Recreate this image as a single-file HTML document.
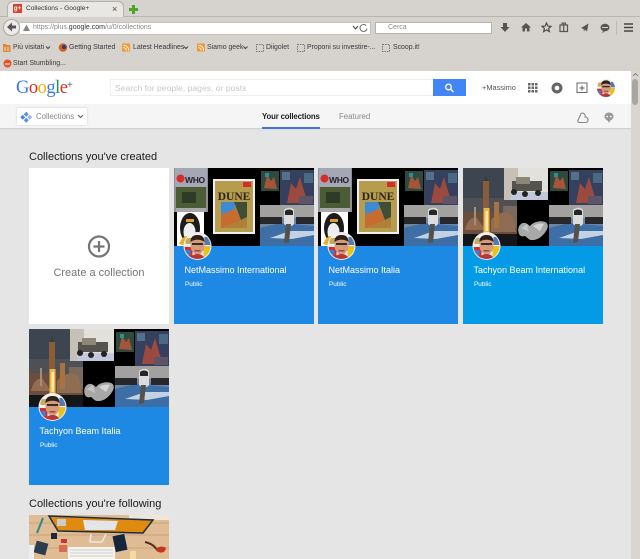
<!DOCTYPE html>
<html><head><meta charset="utf-8"><title>Collections - Google+</title>
<style>
html,body{margin:0;padding:0;width:640px;height:559px;overflow:hidden;background:#e5e5e5;font-family:"Liberation Sans",sans-serif}
#w{position:absolute;left:0;top:0;width:640px;height:559px;overflow:hidden;filter:blur(.3px)}
.a{position:absolute}
.t{position:absolute;white-space:nowrap;line-height:12px}
.b{font-size:6.9px;color:#3a3a3a;top:41.500px}
.ic{position:absolute;left:0;top:0}
.card{position:absolute;width:140px;height:156px}
.card svg{position:absolute;left:0;top:0}
.name{position:absolute;left:10.500px;top:96px;color:#fff;font-size:9px;line-height:12px;white-space:nowrap}
.pub{position:absolute;left:11px;top:110.500px;color:#fff;font-size:6.400px;line-height:12px}
h2{position:absolute;margin:0;font-weight:normal;font-size:11px;color:#1a1a1a;line-height:14px;white-space:nowrap}
</style></head><body><div id="w">

<!-- browser chrome -->
<div class="a" style="left:0;top:0;width:640px;height:71px;background:#d6d2cd"></div>
<div class="a" style="left:0;top:16px;width:640px;height:1px;background:#b9b5b0"></div>
<div class="a" style="left:7px;top:1px;width:117px;height:16px;background:#e9e7e4;border-radius:6px 6px 0 0;box-sizing:border-box;border:1px solid #b5b1ac;border-bottom:0"></div>
<div class="a" style="left:13px;top:4px;width:9px;height:9px;background:#d8432f"></div>
<div class="t" style="left:13px;top:3px;width:9px;text-align:center;font-size:6px;color:#fff;font-weight:bold">g+</div>
<div class="t" style="left:26px;top:2.500px;font-size:6.600px;color:#333">Collections - Google+</div>
<div class="t" style="left:112px;top:3px;font-size:9px;color:#444">×</div>
<div class="a" style="left:132px;top:5px;width:3px;height:9px;background:#4fa52a"></div>
<div class="a" style="left:129px;top:8px;width:9px;height:3px;background:#4fa52a"></div>

<div class="a" style="left:20px;top:22px;width:350px;height:11px;background:#fff;border:1px solid #c4c1bc;box-sizing:content-box;border-left:0"></div>
<div class="a" style="left:3px;top:19px;width:15px;height:15px;border-radius:50%;background:#ecebe9;border:1px solid #aaa6a1"></div>
<svg class="ic" width="640" height="71">
<path d="M7 27l5-4.500v3h4v3h-4v3z" fill="#555"/>
<path d="M23 31l3.500-6.500 3.500 6.500z" fill="#888"/>
<path d="M353 26l2.500 3 2.500-3" fill="none" stroke="#555" stroke-width="1.200"/>
<path d="M366 25.500a3.500 3.500 0 1 0 1 3" fill="none" stroke="#777" stroke-width="1.100"/>
<!-- search -->
<circle cx="380.500" cy="26.500" r="2.600" fill="none" stroke="#777"/><path d="M382.500 28.500l2.500 2.500" stroke="#777" stroke-width="1.200"/>
<!-- toolbar icons -->
<path d="M503 23h4v4h2.500l-4.500 5-4.500-5h2.500z" fill="#555"/>
<path d="M521 27.500l5-4.500 5 4.500h-1.500v4h-2.500v-3h-2v3h-2.500v-4z" fill="#555"/>
<path d="M546.500 23l1.300 3 3.200.3-2.400 2.100.8 3.200-2.900-1.700-2.900 1.700.8-3.200-2.400-2.100 3.200-.3z" fill="none" stroke="#444" stroke-width="1.100"/>
<rect x="560" y="25" width="7.500" height="6.500" fill="none" stroke="#555" stroke-width="1.200"/><path d="M563.700 23v8" stroke="#555" stroke-width="1.200"/><path d="M562 25v-2h3.500v2" fill="none" stroke="#555"/>
<path d="M581 28l7.500-4.500-1.500 8-2-2-1 2-.5-2.500z" fill="#555"/>
<ellipse cx="605" cy="27.500" rx="4.500" ry="3.800" fill="#555"/><path d="M603 31l-1 2 3-1.500z" fill="#555"/><path d="M602 27.500h6" stroke="#d6d2cd" stroke-width="1"/>
<path d="M616.500 21v14" stroke="#bdb9b4"/>
<path d="M624 24h9M624 27.500h9M624 31h9" stroke="#444" stroke-width="1.500"/>
<!-- bookmark icons -->
<rect x="3" y="45" width="7.500" height="7" fill="#d98a3d"/><rect x="3" y="44" width="3.500" height="2" fill="#d98a3d"/><path d="M5 47v4M8 47v4" stroke="#fff" stroke-width=".7"/>
<path d="M46 46.500l2 2 2-2" fill="none" stroke="#444"/>
<circle cx="63" cy="47.500" r="4.300" fill="#d8611f"/><circle cx="64" cy="47" r="2.200" fill="#26418a"/>
<rect x="122" y="43.500" width="8" height="8" fill="#ef9a33"/><path d="M123.500 45.500a4.500 4.500 0 0 1 5 5M123.500 47.800a2.300 2.300 0 0 1 2.700 2.700" fill="none" stroke="#fff" stroke-width=".9"/>
<path d="M184 46.500l2 2 2-2" fill="none" stroke="#444"/>
<rect x="197" y="43.500" width="8" height="8" fill="#ef9a33"/><path d="M198.500 45.500a4.500 4.500 0 0 1 5 5M198.500 47.800a2.300 2.300 0 0 1 2.700 2.700" fill="none" stroke="#fff" stroke-width=".9"/>
<path d="M243.500 46.500l2 2 2-2" fill="none" stroke="#444"/>
<rect x="256.500" y="44.500" width="7" height="7" fill="none" stroke="#777" stroke-dasharray="1.500 1"/>
<rect x="297.500" y="44.500" width="7" height="7" fill="none" stroke="#777" stroke-dasharray="1.500 1"/>
<rect x="382.500" y="44.500" width="7" height="7" fill="none" stroke="#777" stroke-dasharray="1.500 1"/>
<circle cx="7.500" cy="63.500" r="4" fill="#e8502a"/><path d="M5 64h5" stroke="#fff"/>
</svg>
<div class="t" style="left:33px;top:22px;font-size:7px;color:#888">https://plus.<span style="color:#333">google.com</span>/u/0/collections</div>
<div class="a" style="left:375px;top:22px;width:115px;height:10px;background:#fff;border:1px solid #b5b1ac"></div>
<div class="t" style="left:388px;top:22px;font-size:7px;color:#888">Cerca</div>
<div class="t b" style="left:13px">Più visitati</div>
<div class="t b" style="left:69px">Getting Started</div>
<div class="t b" style="left:133px">Latest Headlines</div>
<div class="t b" style="left:207px">Siamo geek</div>
<div class="t b" style="left:266px">Diigolet</div>
<div class="t b" style="left:307px">Proponi su investire-...</div>
<div class="t b" style="left:393px">Scoop.it!</div>
<div class="t b" style="left:13px;top:58px">Start Stumbling...</div>

<!-- g+ header -->
<div class="a" style="left:0;top:71px;width:631px;height:33px;background:#fff"></div>
<div class="t" style="left:16px;top:77.500px;font:18.500px/20px 'Liberation Serif',serif;letter-spacing:-.5px"><span style="color:#3b78e7">G</span><span style="color:#d93025">o</span><span style="color:#f4b400">o</span><span style="color:#3b78e7">g</span><span style="color:#0f9d58">l</span><span style="color:#d93025">e</span></div>
<div class="t" style="left:67px;top:80px;font-size:10px;color:#666">+</div>
<div class="a" style="left:110px;top:79px;width:323px;height:17px;background:#fff;box-sizing:border-box;border:1px solid #eee;border-right:0"></div>
<div class="t" style="left:115px;top:82px;font-size:8.600px;color:#c8c8c8">Search for people, pages, or posts</div>
<div class="a" style="left:433px;top:79px;width:33px;height:17px;background:#4285f4"></div>
<svg class="ic" width="640" height="130">
<circle cx="448.500" cy="87" r="2.800" fill="none" stroke="#fff" stroke-width="1.300"/><path d="M450.500 89l3 3" stroke="#fff" stroke-width="1.500"/>
<g fill="#666"><rect x="528" y="83" width="2.500" height="2.500"/><rect x="531.500" y="83" width="2.500" height="2.500"/><rect x="535" y="83" width="2.500" height="2.500"/><rect x="528" y="86.500" width="2.500" height="2.500"/><rect x="531.500" y="86.500" width="2.500" height="2.500"/><rect x="535" y="86.500" width="2.500" height="2.500"/><rect x="528" y="90" width="2.500" height="2.500"/><rect x="531.500" y="90" width="2.500" height="2.500"/><rect x="535" y="90" width="2.500" height="2.500"/></g>
<circle cx="557" cy="88" r="5.500" fill="#666"/><circle cx="557" cy="88" r="2.300" fill="#fff"/>
<path d="M587.500 92.500h-10.500v-9.500h10v9.500" fill="none" stroke="#666" stroke-width="1"/><path d="M582 85.500v5M579.500 88h5" stroke="#555"/>
</svg>
<div class="t" style="left:482px;top:82px;font-size:7.400px;color:#555">+Massimo</div>

<!-- subbar -->
<div class="a" style="left:0;top:104px;width:631px;height:24px;background:#f5f5f5;box-shadow:0 1px 1px #ccc"></div>
<div class="a" style="left:17px;top:108px;width:70px;height:17px;background:#fff;box-shadow:0 0 2px #ccc"></div>
<svg class="ic" width="640" height="130">
<path d="M581 113.500a2.800 2.800 0 0 1 4 3.500 2.800 2.800 0 0 1 3 2.500c.3 2-1 3-2.500 3h-5.500c-2 0-2.800-1.500-1.500-3.500 1-1.500 1.500-3 2.500-5.500z" fill="none" stroke="#888" stroke-width="1.100"/>
<path d="M609 112.500c3 0 4.500 2 4.500 4s-2 3.800-3.200 4l-1.300 2.500-1.300-2.500c-1.300-.2-3.200-2-3.200-4s1.500-4 4.500-4z" fill="#999"/><circle cx="607.200" cy="116.500" r=".9" fill="#fff"/><circle cx="610.800" cy="116.500" r=".9" fill="#fff"/>
<g fill="#5c8fdc"><rect x="24.500" y="112.500" width="3.500" height="3.500" transform="rotate(45 26.250 114.250)"/><rect x="21" y="115.500" width="3.500" height="3.500" transform="rotate(45 22.750 117.250)" fill="#4285f4"/><rect x="28" y="115.500" width="3.500" height="3.500" transform="rotate(45 29.750 117.250)" fill="#9db9e8"/><rect x="24.500" y="118.500" width="3.500" height="3.500" transform="rotate(45 26.250 120.250)"/></g>
<path d="M78 115l2.500 2.500 2.500-2.500" fill="none" stroke="#666" stroke-width="1.200"/>
</svg>
<div class="t" style="left:36px;top:110.500px;font-size:7.800px;color:#888">Collections</div>
<div class="t" style="left:262px;top:110.500px;font-size:7.800px;color:#222;font-weight:bold;letter-spacing:-.15px">Your collections</div>
<div class="a" style="left:262px;top:127px;width:58px;height:2px;background:#3b78e7"></div>
<div class="t" style="left:339px;top:110.500px;font-size:7.800px;color:#888">Featured</div>

<!-- scrollbar -->
<div class="a" style="left:631px;top:71px;width:9px;height:488px;background:#d9d6d2"></div>
<div class="a" style="left:632px;top:79px;width:6px;height:26px;background:#a9a6a2;border-radius:3px"></div>
<svg class="ic" width="640" height="80"><path d="M633 76l2.500-2.500 2.500 2.500" fill="none" stroke="#888"/></svg>

<!-- content -->
<h2 style="left:29px;top:150px">Collections you've created</h2>
<div class="a" style="left:29px;top:168px;width:140px;height:156px;background:#fff"></div>
<svg class="ic" width="200" height="330"><circle cx="99" cy="246.500" r="10" fill="none" stroke="#757575" stroke-width="2.200"/><path d="M99 241v11M93.500 246.500h11" stroke="#757575" stroke-width="2.200"/></svg>
<div class="t" style="left:29px;top:267px;width:140px;text-align:center;font-size:11px;color:#777">Create a collection</div>

<svg width="0" height="0" style="position:absolute">
<defs>
<symbol id="nebs" viewBox="0 0 140 78">
<rect x="87" y="3" width="18" height="20" fill="#2f4a3c"/><path d="M90 20l3-13 4 6 3-4 3 12z" fill="#a6553a"/><rect x="91" y="5" width="4" height="4" fill="#2e8d9a"/>
<rect x="106" y="2" width="34" height="35" fill="#34405e"/><path d="M113 35l4-20 5 6 4-12 4 14 4 12z" fill="#9c4a3f"/><rect x="108" y="4" width="8" height="8" fill="#55718a"/><rect x="130" y="5" width="9" height="10" fill="#4a6a84"/><rect x="125" y="28" width="14" height="8" fill="#5e5468"/>
<rect x="86" y="37" width="54" height="41" fill="#6f86a3"/><path d="M86 37h54v13H86z" fill="#a2a1a0"/><path d="M86 60l20-5 34 3v20H86z" fill="#3d6ea6"/><path d="M96 70l20-7 24 0v4l-22 4z" fill="#c3d2e2"/>
<rect x="86" y="49" width="22" height="7" fill="#26282c"/><rect x="122" y="49" width="18" height="7" fill="#26282c"/>
<path d="M110 42c3-3 8-3 10 0v14c-2 3-7 3-10 0z" fill="#dcdcdc"/><path d="M111 43c2-2 6-2 8 0v4h-8z" fill="#26262a"/><path d="M112 56l5 0-2 18-5 1z" fill="#55514d"/>
</symbol>
<symbol id="netc" viewBox="0 0 140 78">
<rect width="140" height="78" fill="#000"/>
<rect width="34" height="44" fill="#8f8e95"/><rect x="1" y="0" width="32" height="19" fill="#a6a7b4"/><circle cx="6.500" cy="10.500" r="4" fill="#d92b2b"/><text x="11" y="15" font-size="8.500" font-weight="bold" font-family="Liberation Sans" fill="#22222c" letter-spacing="-.3">WHO</text><rect x="2" y="19" width="30" height="21" fill="#4c5c34"/><rect x="8" y="24" width="14" height="11" fill="#2e3b26"/><rect x="2" y="40" width="30" height="4" fill="#a9a9a9"/>
<rect x="3" y="44" width="27" height="34" fill="#fff"/>
<ellipse cx="16" cy="60" rx="10" ry="15" fill="#1c1c1c"/><ellipse cx="15.500" cy="64" rx="6" ry="9" fill="#eee"/><rect x="12" y="51" width="8" height="3" fill="#e5a021"/><path d="M5 76c3-6 5-8 8-8l-1 10zM26 76c-2-4-4-6-6-7l1 9z" fill="#e6b422"/>
<rect x="39" y="11" width="42" height="55" fill="#efeef5"/><rect x="41" y="13" width="38" height="51" fill="#b69c4d"/><text x="60" y="32" text-anchor="middle" font-size="11.500" font-weight="bold" font-family="Liberation Serif" fill="#2c2415">DUNE</text>
<rect x="47" y="34" width="26" height="26" fill="#b0803b"/><path d="M47 34h14v7l-14 6z" fill="#3f8ad0"/><path d="M60 34h13v15l-6 3z" fill="#3f4f36"/><path d="M47 47l14-6 6 11-20 8z" fill="#c56c2e"/>
<rect x="69" y="14" width="8" height="5" fill="#d92b2b"/>
<use href="#nebs" width="140" height="78"/>
</symbol>
<symbol id="tach" viewBox="0 0 140 78">
<rect width="140" height="78" fill="#000"/>
<rect width="54" height="78" fill="#4e5055"/><rect width="54" height="30" fill="#3c4550"/><rect y="44" width="54" height="24" fill="#6a4d3c"/><rect x="40" y="38" width="14" height="22" fill="#7a6a5e"/><rect y="66" width="54" height="12" fill="#14171a"/>
<path d="M2 62c2-10 8-14 12-12l8 12z" fill="#946b50"/><path d="M28 52c6-8 18-10 22-4l3 16H28z" fill="#8f6d52"/>
<rect x="20" y="13" width="6" height="27" fill="#8a5c3a"/><path d="M21 13l2-7 2 7z" fill="#3a3a3a"/><rect x="20.500" y="40" width="6" height="26" fill="#f0b64a"/><rect x="22.500" y="43" width="2.500" height="20" fill="#fde9a7"/><rect x="31" y="34" width="5" height="26" fill="#a87243"/><rect x="11" y="39" width="2" height="18" fill="#a28e7e"/>
<rect x="41" y="0" width="44" height="32" fill="#e2e1dc"/><rect x="41" y="0" width="14" height="32" fill="#c6c0b6"/><rect x="48" y="24" width="37" height="8" fill="#c2c8dc"/><rect x="49" y="13" width="30" height="10" fill="#55534e"/><rect x="53" y="9" width="14" height="7" fill="#8d8778"/><circle cx="51" cy="24" r="3" fill="#222"/><circle cx="62" cy="26" r="3" fill="#222"/><circle cx="75" cy="25" r="3" fill="#222"/>
<path d="M56 66c-2-5 0-10 4-11 4-1 6 3 7 3 3-4 10-6 15-4 3 1 4 5 1 9-3 5-8 9-13 9-4 1-6-3-8-4-3 1-5 0-6-2z" fill="#a8a8a8"/><path d="M70 58c3-2 8-3 11-2l-4 7z" fill="#d4d4d4"/><path d="M58 60l6-4 2 8z" fill="#c5c5c5"/>
<use href="#nebs" width="140" height="78"/>
</symbol>
<symbol id="ava" viewBox="0 0 26 26">
<clipPath id="avc"><circle cx="13" cy="13" r="13"/></clipPath>
<g clip-path="url(#avc)"><rect width="26" height="26" fill="#f2f0ec"/><rect y="14" width="8" height="12" fill="#d92b2b"/><rect x="0" y="17" width="6" height="5" fill="#3c7fd0"/><rect x="19" y="13" width="7" height="13" fill="#e9c11f"/><rect x="20" y="4" width="6" height="8" fill="#5578b0"/><rect x="1" y="5" width="6" height="6" fill="#c2ab62"/>
<ellipse cx="13" cy="12.500" rx="7" ry="9" fill="#d59b7d"/><path d="M6 9c0-6 4-7 7-7s7 1 7 7c-3-3-11-3-14 0z" fill="#2d2019"/><rect x="7.500" y="10" width="11" height="2" fill="#3b2a22"/><rect x="10" y="17" width="6" height="1.500" fill="#9c4b41"/><path d="M6 26c1-4 4-5 7-5s6 1 7 5z" fill="#b73737"/></g>
</symbol>
</defs>
</svg>

<div class="card" style="left:174px;top:168px;background:#1e88e5">
<svg width="140" height="78"><use href="#netc" width="140" height="78"/></svg>
<svg width="140" height="92"><circle cx="23.500" cy="78" r="14" fill="#eee"/><use href="#ava" x="10.500" y="65" width="26" height="26"/></svg>
<div class="name">NetMassimo International</div><div class="pub">Public</div>
</div>
<div class="card" style="left:318px;top:168px;background:#1e88e5">
<svg width="140" height="78"><use href="#netc" width="140" height="78"/></svg>
<svg width="140" height="92"><circle cx="23.500" cy="78" r="14" fill="#eee"/><use href="#ava" x="10.500" y="65" width="26" height="26"/></svg>
<div class="name">NetMassimo Italia</div><div class="pub">Public</div>
</div>
<div class="card" style="left:463px;top:168px;background:#039be5">
<svg width="140" height="78"><use href="#tach" width="140" height="78"/></svg>
<svg width="140" height="92"><circle cx="23.500" cy="78" r="14" fill="#eee"/><use href="#ava" x="10.500" y="65" width="26" height="26"/></svg>
<div class="name">Tachyon Beam International</div><div class="pub">Public</div>
</div>
<div class="card" style="left:29px;top:329px;background:#1e88e5">
<svg width="140" height="78"><use href="#tach" width="140" height="78"/></svg>
<svg width="140" height="92"><circle cx="23.500" cy="78" r="14" fill="#eee"/><use href="#ava" x="10.500" y="65" width="26" height="26"/></svg>
<div class="name">Tachyon Beam Italia</div><div class="pub">Public</div>
</div>

<svg class="ic" width="640" height="100" style="top:0"><use href="#ava" x="597" y="79" width="18" height="18"/></svg>

<h2 style="left:29px;top:497px">Collections you're following</h2>
<svg class="a" style="left:29px;top:515px" width="140" height="44" viewBox="0 0 140 44">
<rect width="140" height="44" fill="#dfbc94"/>
<path d="M0 8h140M0 20h140M0 33h140" stroke="#cba479" stroke-width="1"/>
<rect x="100" y="0" width="40" height="5" fill="#efe5d8"/>
<path d="M20 1l104 4-10 13-85-2z" fill="#e08a0f" stroke="#1a2e4a" stroke-width="1.500"/>
<rect x="28" y="4" width="9" height="7" fill="#ccc"/><path d="M54 5l35 1-3 9h-30z" fill="#e3e6e8"/>
<path d="M62 19l-1 8h12l4-8" fill="none" stroke="#e8e8e8" stroke-width="1.500"/>
<path d="M14 3L8 18" stroke="#2a8a8a" stroke-width="2"/><rect x="22" y="18" width="6" height="6" fill="#1e2a38"/>
<rect x="6" y="27" width="12" height="12" fill="#2c3d4e" transform="rotate(15 12 33)"/><rect x="0" y="30" width="5" height="14" fill="#eee"/>
<rect x="32" y="24" width="6" height="4" fill="#c33"/><rect x="30" y="30" width="8" height="7" fill="#d96d4e"/>
<rect x="39" y="32" width="47" height="12" fill="#f5f3ee"/><path d="M41 35h43M41 38h43M41 41h43" stroke="#ccc"/>
<rect x="85" y="20" width="12" height="16" fill="#15263a" transform="rotate(-12 91 28)"/>
<rect x="101" y="36" width="6" height="8" fill="#f4d9a0"/>
<path d="M116 27c8 2 10 5 13 9" stroke="#5a2c1c" stroke-width="2" fill="none"/><path d="M127 34c2 5 9 5 10-1-2-2-8-2-10 1z" fill="#c8341c"/>
</svg>
</div></body></html>
